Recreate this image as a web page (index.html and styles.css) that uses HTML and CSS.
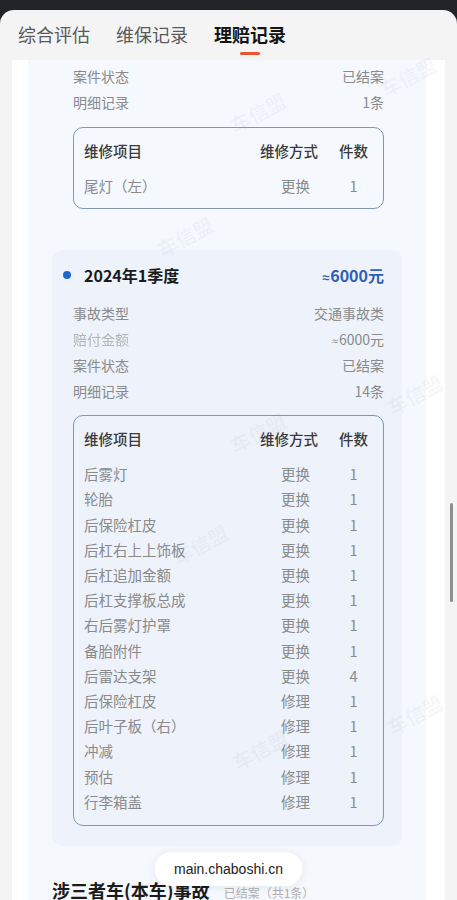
FILE: index.html
```html
<!DOCTYPE html>
<html lang="zh-CN">

<head>
  <meta charset="UTF-8">
  <meta name="viewport" content="width=device-width, initial-scale=1.0">
  <title>理赔记录</title>
  <link rel="stylesheet" href="styles.css">
</head>

<body>
  <div class="screen">
    <div class="sheet">
      <nav class="tabs">
        <span class="tab">综合评估</span>
        <span class="tab">维保记录</span>
        <span class="tab active">理赔记录</span>
      </nav>

      <div class="content">
        <section class="panel">

          <div class="record record-cut">
            <div class="info-row"><span>案件状态</span><span>已结案</span></div>
            <div class="info-row"><span>明细记录</span><span>1条</span></div>
            <div class="repair-box">
              <div class="repair-head">
                <span>维修项目</span><span>维修方式</span><span>件数</span>
              </div>
              <div class="repair-row"><span>尾灯（左）</span><span>更换</span><span>1</span></div>
            </div>
          </div>

          <div class="record record-main">
            <div class="record-title">
              <span class="dot"></span>
              <span class="period">2024年1季度</span>
              <span class="amount"><span class="approx">≈</span>6000元</span>
            </div>
            <div class="info-row"><span>事故类型</span><span>交通事故类</span></div>
            <div class="info-row"><span class="smudge">赔付金额</span><span><span class="approx">≈</span>6000元</span></div>
            <div class="info-row"><span>案件状态</span><span>已结案</span></div>
            <div class="info-row"><span>明细记录</span><span>14条</span></div>
            <div class="repair-box" id="repairBox">
              <div class="repair-head">
                <span>维修项目</span><span>维修方式</span><span>件数</span>
              </div>
            </div>
          </div>

          <div class="section-head">
            涉三者车(本车)事故
            <span class="section-note">已结案（共1条）</span>
          </div>
        </section>
      </div>
    </div>

    <!-- faint watermark stamps over the list -->
    <span class="mark" style="left: 228px; top: 98px;">车信盟</span>
    <span class="mark" style="left: 378px; top: 62px;">车信盟</span>
    <span class="mark" style="left: 155px; top: 222px;">车信盟</span>
    <span class="mark" style="left: 385px; top: 380px;">车信盟</span>
    <span class="mark" style="left: 228px; top: 418px;">车信盟</span>
    <span class="mark" style="left: 170px; top: 530px;">车信盟</span>
    <span class="mark" style="left: 230px; top: 735px;">车信盟</span>
    <span class="mark" style="left: 385px; top: 700px;">车信盟</span>

    <div class="url-pill">main.chaboshi.cn</div>
    <div class="scrollbar"></div>
  </div>

  <script>
    const repairs = [
      ['后雾灯', '更换', 1],
      ['轮胎', '更换', 1],
      ['后保险杠皮', '更换', 1],
      ['后杠右上上饰板', '更换', 1],
      ['后杠追加金额', '更换', 1],
      ['后杠支撑板总成', '更换', 1],
      ['右后雾灯护罩', '更换', 1],
      ['备胎附件', '更换', 1],
      ['后雷达支架', '更换', 4],
      ['后保险杠皮', '修理', 1],
      ['后叶子板（右）', '修理', 1],
      ['冲减', '修理', 1],
      ['预估', '修理', 1],
      ['行李箱盖', '修理', 1]
    ];

    const repairBox = document.getElementById('repairBox');
    repairs.forEach(([name, way, count]) => {
      const row = document.createElement('div');
      row.classList.add('repair-row');
      row.innerHTML = `<span>${name}</span><span>${way}</span><span>${count}</span>`;
      repairBox.appendChild(row);
    });
  </script>
</body>

</html>
```

FILE: styles.css
```css
body {
  margin: 0;
  padding: 0;
  background-color: #23242a;
  font-family: "Noto Sans CJK SC", "Noto Sans", sans-serif;
}

.screen {
  position: relative;
  width: 457px;
  height: 900px;
  overflow: hidden;
}

.sheet {
  margin-top: 10px;
  height: 890px;
  background-color: #f4f4f5;
  border-radius: 14px 14px 0 0;
  overflow: hidden;
}

.tabs {
  display: flex;
  align-items: center;
  gap: 26px;
  height: 50px;
  padding: 0 18px 2px;
  box-sizing: border-box;
}

.tab {
  position: relative;
  font-size: 18px;
  line-height: 26px;
  color: #5a5a5a;
}

.tab.active {
  color: #141414;
  font-weight: 700;
}

.tab.active::after {
  content: "";
  position: absolute;
  left: 50%;
  bottom: -8px;
  width: 20px;
  height: 3px;
  margin-left: -10px;
  border-radius: 2px;
  background-color: #e9552f;
}

.content {
  margin: 0 12px;
  height: 840px;
  background-color: #ffffff;
  padding: 0 19px 0 16px;
}

.panel {
  height: 100%;
  background-color: #f5f8fd;
  padding-top: 3px;
}

.record {
  margin: 0 24px;
  padding: 0 18px 0 21px;
  border-radius: 10px;
}

.record-cut {
  padding-bottom: 21px;
  margin-bottom: 20px;
}

.record-main {
  background-color: #edf2fb;
  padding-top: 14px;
  padding-bottom: 20px;
}

.record-title {
  display: flex;
  align-items: center;
  height: 22px;
  margin-bottom: 14px;
  margin-left: -10px;
}

.dot {
  width: 8px;
  height: 8px;
  border-radius: 50%;
  background-color: #1f66cf;
  margin-right: 13px;
}

.period {
  flex: 1;
  font-size: 16px;
  font-weight: 700;
  color: #1b1b1b;
}

.amount {
  font-size: 16px;
  font-weight: 700;
  color: #2f60b6;
}

.approx {
  font-family: "Noto Sans", sans-serif;
  font-size: 0.8em;
  margin-right: 1px;
}

.info-row {
  display: flex;
  justify-content: space-between;
  align-items: center;
  height: 26px;
  font-size: 14px;
  color: #8a8a8a;
}

.smudge {
  color: #b4b4b4;
  filter: blur(0.7px);
}

.repair-box {
  margin-top: 12px;
  border: 1.5px solid #8097b8;
  border-radius: 10px;
  padding: 11px 15px 10px 10px;
}

.record-main .repair-box {
  margin-top: 11px;
  padding-bottom: 11px;
}

.repair-head,
.repair-row {
  display: grid;
  grid-template-columns: 1fr 59px 29px;
  column-gap: 20px;
  align-items: center;
  font-size: 14.5px;
}

.repair-head {
  height: 22px;
  margin-bottom: 12px;
  color: #3a3a3a;
  font-weight: 500;
}

.repair-row {
  height: 25.2px;
  color: #8a8a8a;
}

.repair-row span:nth-child(2) {
  padding-left: 21px;
}

.repair-row span:nth-child(3) {
  text-align: center;
}

.section-head {
  margin: 31px 24px 0;
  font-size: 18px;
  font-weight: 700;
  line-height: 26px;
  color: #1b1b1b;
}

.section-note {
  margin-left: 10px;
  font-size: 12px;
  font-weight: 400;
  color: #b0b0b0;
}

.mark {
  position: absolute;
  transform: rotate(-28deg);
  white-space: nowrap;
  font-size: 20px;
  font-weight: 700;
  color: rgba(110, 125, 150, 0.06);
  pointer-events: none;
}

.url-pill {
  position: absolute;
  left: 50%;
  top: 852px;
  transform: translateX(-50%);
  padding: 0 20px;
  height: 34px;
  line-height: 34px;
  border-radius: 17px;
  background-color: #ffffff;
  box-shadow: 0 1px 8px rgba(0, 0, 0, 0.08);
  font-family: "Liberation Sans", Arial, sans-serif;
  font-size: 14px;
  color: #222;
}

.scrollbar {
  position: absolute;
  left: 450px;
  top: 503px;
  width: 3px;
  height: 99px;
  border-radius: 2px;
  background-color: #8e8e8e;
}
```
